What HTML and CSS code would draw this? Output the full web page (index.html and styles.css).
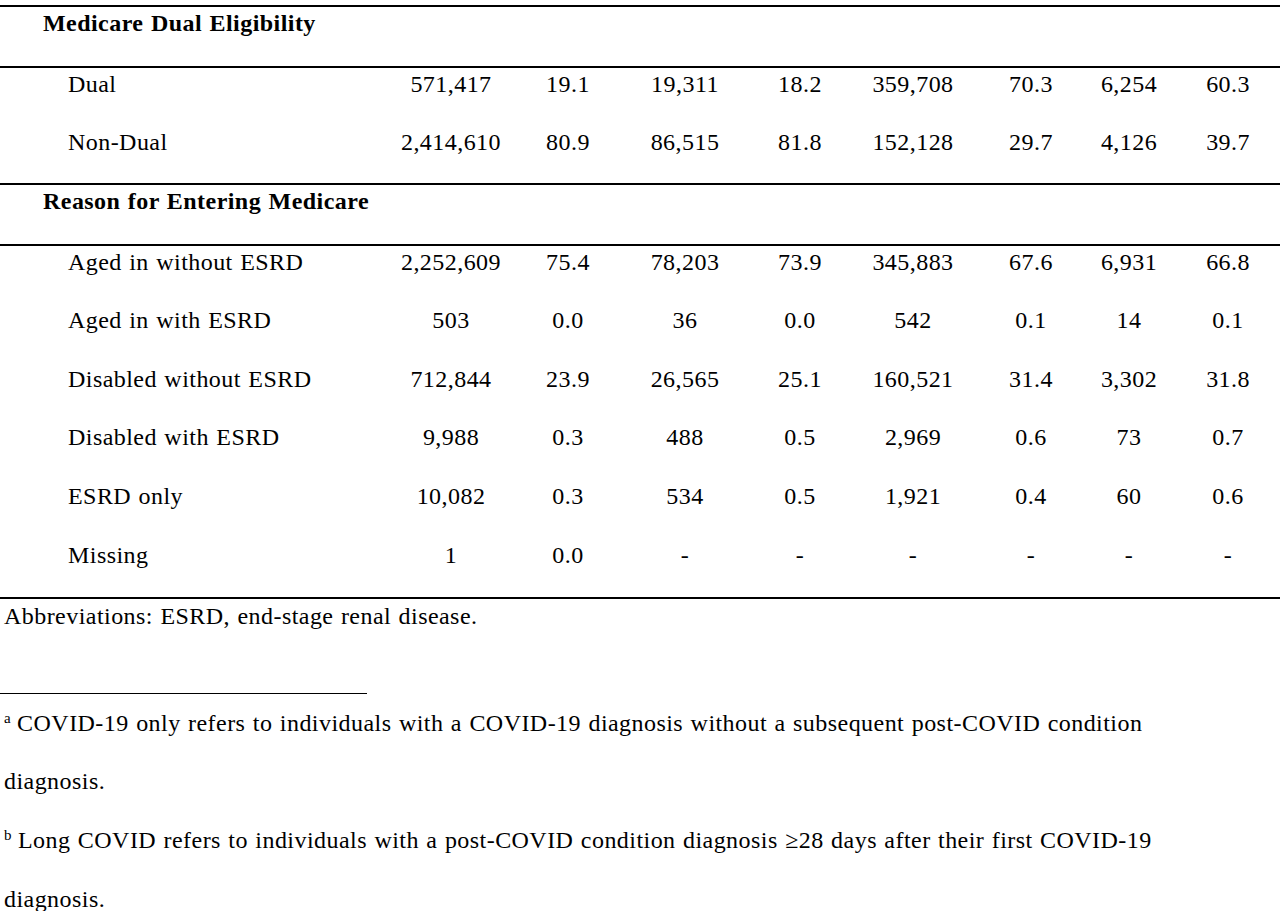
FILE: index.html
```html
<!DOCTYPE html>
<html lang="en">
<head>
  <meta charset="UTF-8" />
  <meta name="viewport" content="width=device-width, initial-scale=1.0"/>
  <title>Table – Medicare eligibility</title>
  <link rel="stylesheet" href="styles.css">
</head>
<body>
  <table class="tabela">
    <colgroup>
      <col class="c-rotulo">
      <col class="c1"><col class="c2"><col class="c3"><col class="c4">
      <col class="c5"><col class="c6"><col class="c7"><col class="c8">
    </colgroup>
    <tbody>
      <tr class="secao">
        <td colspan="9">Medicare Dual Eligibility</td>
      </tr>
      <tr><td>Dual</td><td>571,417</td><td>19.1</td><td>19,311</td><td>18.2</td><td>359,708</td><td>70.3</td><td>6,254</td><td>60.3</td></tr>
      <tr><td>Non-Dual</td><td>2,414,610</td><td>80.9</td><td>86,515</td><td>81.8</td><td>152,128</td><td>29.7</td><td>4,126</td><td>39.7</td></tr>

      <tr class="secao">
        <td colspan="9">Reason for Entering Medicare</td>
      </tr>
      <tr><td>Aged in without ESRD</td><td>2,252,609</td><td>75.4</td><td>78,203</td><td>73.9</td><td>345,883</td><td>67.6</td><td>6,931</td><td>66.8</td></tr>
      <tr><td>Aged in with ESRD</td><td>503</td><td>0.0</td><td>36</td><td>0.0</td><td>542</td><td>0.1</td><td>14</td><td>0.1</td></tr>
      <tr><td>Disabled without ESRD</td><td>712,844</td><td>23.9</td><td>26,565</td><td>25.1</td><td>160,521</td><td>31.4</td><td>3,302</td><td>31.8</td></tr>
      <tr><td>Disabled with ESRD</td><td>9,988</td><td>0.3</td><td>488</td><td>0.5</td><td>2,969</td><td>0.6</td><td>73</td><td>0.7</td></tr>
      <tr><td>ESRD only</td><td>10,082</td><td>0.3</td><td>534</td><td>0.5</td><td>1,921</td><td>0.4</td><td>60</td><td>0.6</td></tr>
      <tr><td>Missing</td><td>1</td><td>0.0</td><td>-</td><td>-</td><td>-</td><td>-</td><td>-</td><td>-</td></tr>
    </tbody>
  </table>

  <p class="abrev">Abbreviations: ESRD, end-stage renal disease.</p>

  <div class="notas">
    <hr class="regua">
    <p class="nota">
      <span class="linha"><span class="marca">a</span>COVID-19 only refers to individuals with a COVID-19 diagnosis without a subsequent post-COVID condition</span>
      <span class="linha">diagnosis.</span>
    </p>
    <p class="nota">
      <span class="linha"><span class="marca">b</span>Long COVID refers to individuals with a post-COVID condition diagnosis &ge;28 days after their first COVID-19</span>
      <span class="linha">diagnosis.</span>
    </p>
  </div>
</body>
</html>
```

FILE: styles.css
```css
* {
  margin: 0; padding: 0; box-sizing: border-box;
}
html, body {
  background: #fff;
  overflow: hidden;
}
body {
  font-family: "Liberation Serif", "Times New Roman", serif;
  font-size: 24px;
  letter-spacing: 0.45px;
  word-spacing: 1px;
  color: #000;
  padding-top: 5px;
}

.tabela {
  width: 1290px;
  table-layout: fixed;
  border-collapse: collapse;
  border-bottom: 2px solid #000;
}
.c-rotulo { width: 392px; }
.c1 { width: 118px; }
.c2 { width: 116px; }
.c3 { width: 118px; }
.c4 { width: 112px; }
.c5 { width: 114px; }
.c6 { width: 122px; }
.c7 { width: 74px; }
.c8 { width: 124px; }

.tabela td {
  height: 58.7px;
  line-height: 26px;
  padding-top: 3px;
  vertical-align: top;
  text-align: center;
  white-space: nowrap;
}
.tabela td:first-child {
  text-align: left;
  padding-left: 68px;
}
.tabela tr.secao td {
  height: 61px;
  font-weight: bold;
  padding-left: 43px;
  border-top: 2px solid #000;
  border-bottom: 2px solid #000;
}

.abrev {
  line-height: 26px;
  padding: 4px 0 0 4px;
}

.notas {
  padding-top: 64px;
}
.regua {
  width: 367px;
  border: none;
  border-top: 1px solid #000;
}
.nota {
  line-height: 58.7px;
  padding-left: 4px;
}
.linha {
  display: block;
  white-space: nowrap;
}
.marca {
  display: inline-block;
  font-size: 15px;
  line-height: 15px;
  vertical-align: 8px;
  margin-right: 6px;
}
```
